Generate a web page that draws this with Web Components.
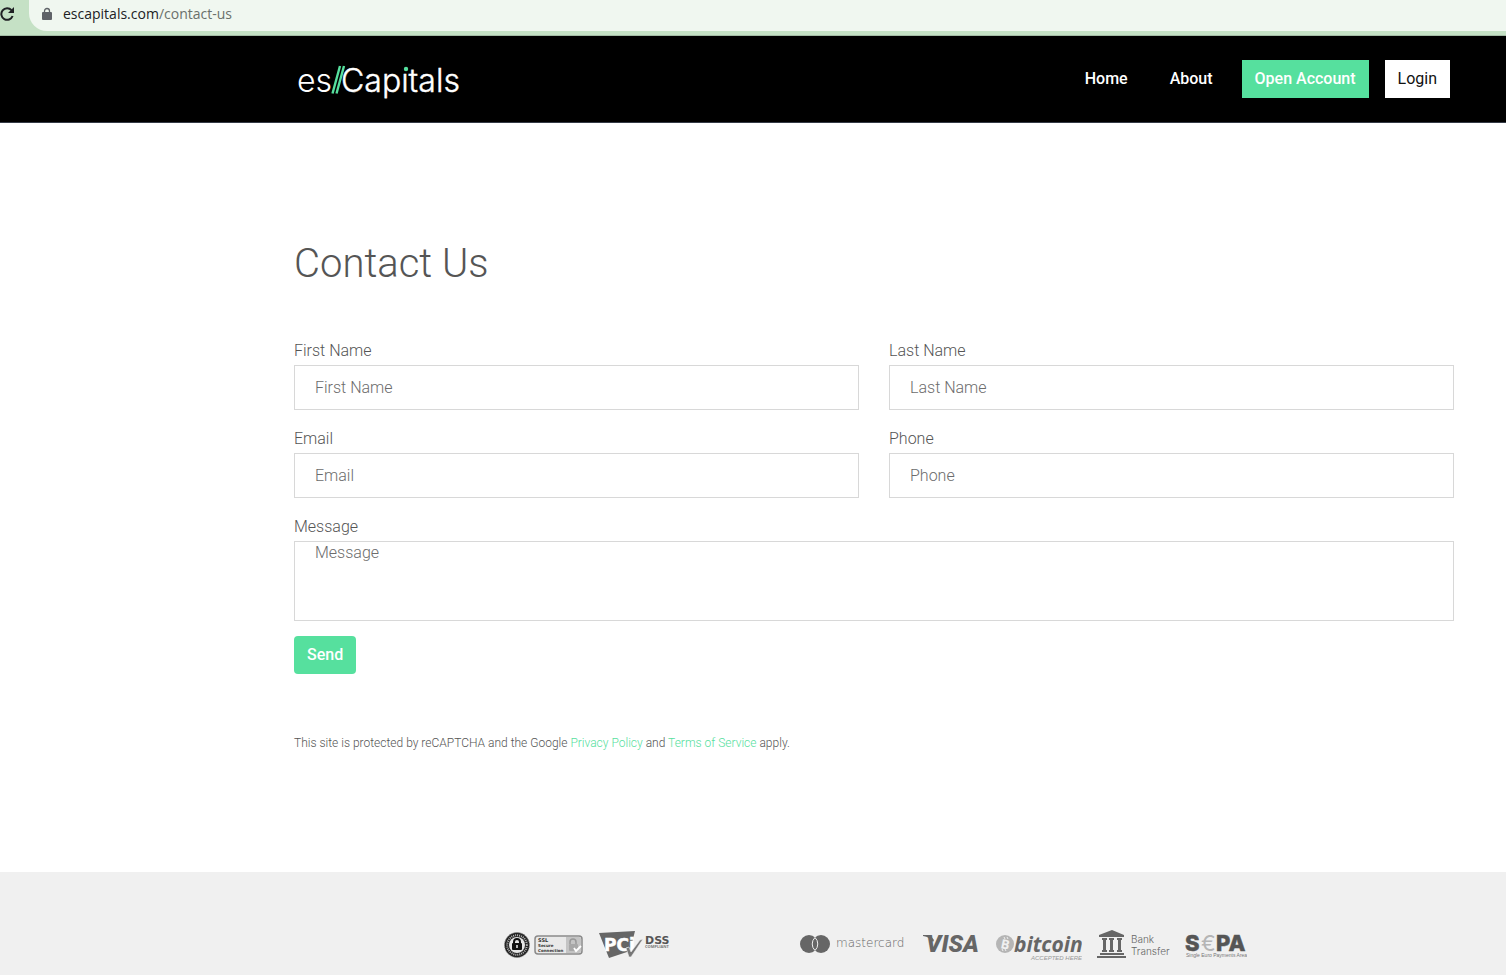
<!DOCTYPE html>
<html lang="en">
<head>
<meta charset="utf-8">
<title>Contact Us</title>
<style>
  body {
    --green: #56e09e;
    --gutter-left: 294px;
    --gutter-right: 52px;
    margin: 0;
    background: #fff;
    color: #555;
    font: 300 16px/24px Roboto, sans-serif;
  }
</style>
</head>
<body>
<address-bar host="escapitals.com" path="/contact-us"></address-bar>
<site-header>
  <nav-item href="#home">Home</nav-item>
  <nav-item href="#about">About</nav-item>
  <nav-item href="#open" variant="primary">Open Account</nav-item>
  <nav-item href="#login" variant="light">Login</nav-item>
</site-header>
<contact-page heading="Contact Us">
  <contact-field label="First Name"></contact-field>
  <contact-field label="Last Name"></contact-field>
  <contact-field label="Email" type="email"></contact-field>
  <contact-field label="Phone" type="tel"></contact-field>
  <contact-field label="Message" multiline></contact-field>
</contact-page>
<site-footer></site-footer>

<script>
class BaseElement extends HTMLElement {
  constructor() {
    super();
    this.attachShadow({ mode: 'open' });
  }

  connectedCallback() {
    this.shadowRoot.innerHTML = this.render();
  }
}

class AddressBar extends BaseElement {
  render() {
    return `
      <style>
        :host {
          display: flex;
          gap: 14px;
          box-sizing: border-box;
          height: 36px;
          padding-bottom: 4px;
          background: #c5e1c5;
          border-bottom: 1px solid #a3bca5;
          font: 400 14px/28px "Open Sans", sans-serif;
          color: #202124;
        }
        button { width: 15px; padding: 0 0 3px; border: 0; background: none; }
        svg { display: block; }
        .url {
          flex: 1;
          display: flex;
          align-items: center;
          gap: 11px;
          padding-left: 13px;
          padding-bottom: 3px;
          background: #f0f7f0;
          border-bottom-left-radius: 18px;
        }
        .path { color: #6a706b; }
      </style>
      <button aria-label="Reload">
        <svg width="15" height="28" viewBox="0 0 15 28" fill="none" stroke="#202124" stroke-width="2">
          <path d="M11.5 10.2A5.8 5.8 0 1 0 12.6 16"/>
          <path d="M14 7v6H8z" fill="#202124" stroke="none"/>
        </svg>
      </button>
      <div class="url">
        <svg width="10" height="14" viewBox="0 0 10 14">
          <rect y="5" width="10" height="8" rx="1" fill="#5f6368"/>
          <path d="M2.5 6V4a2.5 2.5 0 0 1 5 0v2" fill="none" stroke="#5f6368" stroke-width="1.3"/>
        </svg>
        <span>${this.getAttribute('host')}<span class="path">${this.getAttribute('path')}</span></span>
      </div>
    `;
  }
}

class SiteHeader extends BaseElement {
  render() {
    return `
      <style>
        :host {
          display: flex;
          justify-content: space-between;
          align-items: center;
          padding: 22px 56px 22px var(--gutter-left);
          background: #000;
          border-bottom: 1px solid #343a46;
        }
        svg { display: block; font: 400 32px Inter, sans-serif; }
        nav { display: flex; gap: 16px; }
      </style>
      <a href="#home" aria-label="es//Capitals">
        <svg width="172" height="42" viewBox="0 0 172 42" overflow="visible" fill="#fff">
          <text x="3" y="34" font-weight="300">es</text>
          <text x="47" y="34" font-weight="300" stroke="#fff" stroke-width="0.400">Capitals</text>
          <circle cx="112" cy="11" r="3.500" fill="#000"/>
          <circle cx="112" cy="11" r="2.200" fill="#56e09e"/>
          <path d="M38.500 35.500 46 8M42.500 35.500 50 8" stroke="#56e09e" stroke-width="2.400"/>
        </svg>
      </a>
      <nav><slot></slot></nav>
    `;
  }
}

class NavItem extends BaseElement {
  render() {
    return `
      <style>
        :host { display: block; }
        a {
          display: block;
          padding: 7px 13px;
          color: #fff;
          font-weight: 500;
          text-decoration: none;
        }
        :host([variant="primary"]) a { background: var(--green); }
        :host([variant="light"]) a { background: #fff; color: #111; font-weight: 400; }
      </style>
      <a href="${this.getAttribute('href')}"><slot></slot></a>
    `;
  }
}

class ContactPage extends BaseElement {
  render() {
    return `
      <style>
        :host {
          display: block;
          padding: 116px var(--gutter-right) 119px var(--gutter-left);
        }
        h1 { margin: 0 0 50px; font-size: 40px; font-weight: 300; line-height: 50px; }
        form {
          display: grid;
          grid-template-columns: 1fr 1fr;
          column-gap: 30px;
        }
        button {
          justify-self: start;
          padding: 7px 13px;
          border: 0;
          border-radius: 4px;
          background: var(--green);
          color: #fff;
          font: 500 16px/24px Roboto, sans-serif;
        }
        p { margin: 59px 0 0; font-size: 12px; line-height: 20px; }
        a { color: var(--green); text-decoration: none; }
      </style>
      <h1>${this.getAttribute('heading')}</h1>
      <form>
        <slot></slot>
        <button type="button">Send</button>
      </form>
      <p>This site is protected by reCAPTCHA and the Google <a href="#privacy">Privacy Policy</a> and <a href="#terms">Terms of Service</a> apply.</p>
    `;
  }
}

class ContactField extends BaseElement {
  render() {
    const label = this.getAttribute('label');
    const type = this.getAttribute('type') || 'text';
    const control = this.hasAttribute('multiline')
      ? `<textarea id="control" placeholder="${label}"></textarea>`
      : `<input id="control" type="${type}" placeholder="${label}">`;

    return `
      <style>
        :host { display: block; }
        :host([multiline]) { grid-column: 1 / -1; }
        label { display: block; padding-bottom: 2px; }
        input, textarea {
          display: block;
          box-sizing: border-box;
          width: 100%;
          height: 45px;
          margin: 0 0 17px;
          padding: 0 20px;
          border: 1px solid #d8d8d8;
          border-radius: 0;
          background: #fff;
          color: #555;
          font: 300 16px/21px Roboto, sans-serif;
        }
        textarea { height: 80px; margin-bottom: 15px; resize: none; }
        ::placeholder { color: #6c6c6c; }
      </style>
      <label for="control">${label}</label>
      ${control}
    `;
  }
}

class SiteFooter extends BaseElement {
  render() {
    return `
      <style>
        :host {
          display: flex;
          justify-content: center;
          gap: 129px;
          box-sizing: border-box;
          height: 103px;
          padding: 54px var(--gutter-right) 0 var(--gutter-left);
          background: #f0f0f0;
        }
        div { display: flex; gap: 15px; }
        svg { display: block; }
      </style>
      <div>${securityLogos}</div>
      <div>${paymentLogos}</div>
    `;
  }
}

const securityLogos = `
  <svg width="81" height="38" viewBox="0 0 81 38" role="img" aria-label="SSL Secure Connection">
    <circle cx="15" cy="19" r="12.500" fill="#222" stroke="#888" stroke-dasharray="1 1"/>
    <circle cx="15" cy="19" r="9.800" fill="none" stroke="#bbb" stroke-width="2" stroke-dasharray="1 1"/>
    <circle cx="15" cy="19" r="8" fill="#e6e6e6"/>
    <path d="M12 18v-2a3 3 0 0 1 6 0v2" fill="none" stroke="#111" stroke-width="2"/>
    <rect x="10" y="17" width="10" height="7" rx="1" fill="#111"/>
    <path d="M15 19v3" stroke="#eee" stroke-width="1.500"/>
    <rect x="33" y="10" width="47" height="18" rx="3" fill="#e9e9e9" stroke="#8a8a8a" stroke-width="1.500"/>
    <path d="M64 11h13a2 2 0 0 1 2 2v12a2 2 0 0 1-2 2H64z" fill="#c4c4c4"/>
    <path d="M68 18v-2a3 3 0 0 1 6 0v2" fill="none" stroke="#999" stroke-width="1.500"/>
    <rect x="67" y="18" width="9" height="7" rx="1" fill="#a8a8a8"/>
    <path d="m72 22 2 3 5-5" fill="none" stroke="#fff" stroke-width="1.800"/>
    <g font-family="DejaVu Sans" font-weight="700" fill="#333">
      <text x="36" y="16" font-size="5">SSL</text>
      <text x="36" y="21" font-size="4">Secure</text>
      <text x="36" y="26" font-size="4">Connection</text>
    </g>
  </svg>
  <svg width="73" height="38" viewBox="0 0 73 38" role="img" aria-label="PCI DSS compliant">
    <path d="m1 7 36-2-5 20-21 7z" fill="#666"/>
    <text x="6" y="25" font-family="DejaVu Sans" font-size="17" font-weight="700" fill="#fff" stroke="#fff" stroke-width="0.500">PCi</text>
    <path d="m28 22 3-1 2 5 9-12 3-1-12 18h-2z" fill="#777" stroke="#f0f0f0" stroke-width="0.600"/>
    <text x="47" y="18" font-family="DejaVu Sans" font-size="11" font-weight="700" fill="#555">DSS</text>
    <text x="47" y="22" font-family="Open Sans" font-size="4" font-weight="700" fill="#777">COMPLIANT</text>
  </svg>
`;

const paymentLogos = `
  <svg width="108" height="38" viewBox="0 0 108 38" role="img" aria-label="mastercard">
    <circle cx="9" cy="18" r="9" fill="#666"/>
    <circle cx="21" cy="18" r="9" fill="#666"/>
    <path d="M15 11.500a9 9 0 0 1 0 13 9 9 0 0 1 0-13z" fill="#666" stroke="#f0f0f0"/>
    <text x="36" y="21" font-family="DejaVu Sans" font-size="12" fill="#666">mastercard</text>
  </svg>
  <svg width="58" height="38" viewBox="0 0 58 38" role="img" aria-label="VISA">
    <path d="M0 9h7l4 5-1 2Q7 11 0 10z" fill="#666"/>
    <text x="3" y="26" font-family="Roboto" font-size="24" font-weight="900" font-style="italic" fill="#666">VISA</text>
  </svg>
  <svg width="86" height="38" viewBox="0 0 86 38" role="img" aria-label="bitcoin accepted here">
    <circle cx="9" cy="18" r="9" fill="#b5b5b5"/>
    <text x="5" y="23" font-family="Open Sans" font-size="13" font-weight="700" fill="#f0f0f0" transform="rotate(12 9 18)">B</text>
    <path d="m8 11 1 2m2-2 1 2M6 23l1 2m2-2 1 2" stroke="#f0f0f0"/>
    <text x="18" y="26" font-family="Open Sans" font-size="21" font-weight="700" font-style="italic" fill="#666">bitcoin</text>
    <text x="35" y="34" font-family="Liberation Sans" font-size="6" font-style="italic" fill="#999">ACCEPTED HERE</text>
  </svg>
  <svg width="73" height="38" viewBox="0 0 73 38" role="img" aria-label="Bank Transfer">
    <path d="M2 11v-2l13-5 12 5v2zM3 27h24v2H3zM0 30h29v2H0zM5 12h5v2H9v10h1v2H5v-2h1V14H5zm7 0h5v2h-1v10h1v2h-5v-2h1V14h-1zm8 0h5v2h-1v10h1v2h-5v-2h1V14h-1z" fill="#666"/>
    <g font-family="Inter" font-size="10" fill="#666">
      <text x="34" y="17">Bank</text>
      <text x="34" y="29">Transfer</text>
    </g>
  </svg>
  <svg width="62" height="38" viewBox="0 0 62 38" role="img" aria-label="SEPA Single Euro Payments Area">
    <g font-family="Inter" font-size="22" font-weight="800" fill="#555">
      <text x="0" y="25" stroke="#555" stroke-width="0.500">S</text>
      <text x="16" y="25" font-weight="400" fill="#b5b5b5">€</text>
      <text x="31" y="25" stroke="#555" stroke-width="0.500">PA</text>
    </g>
    <text x="1" y="31" font-family="Liberation Sans" font-size="5" fill="#777">Single Euro Payments Area</text>
  </svg>
`;

customElements.define('address-bar', AddressBar);
customElements.define('site-header', SiteHeader);
customElements.define('nav-item', NavItem);
customElements.define('contact-page', ContactPage);
customElements.define('contact-field', ContactField);
customElements.define('site-footer', SiteFooter);
</script>
</body>
</html>
